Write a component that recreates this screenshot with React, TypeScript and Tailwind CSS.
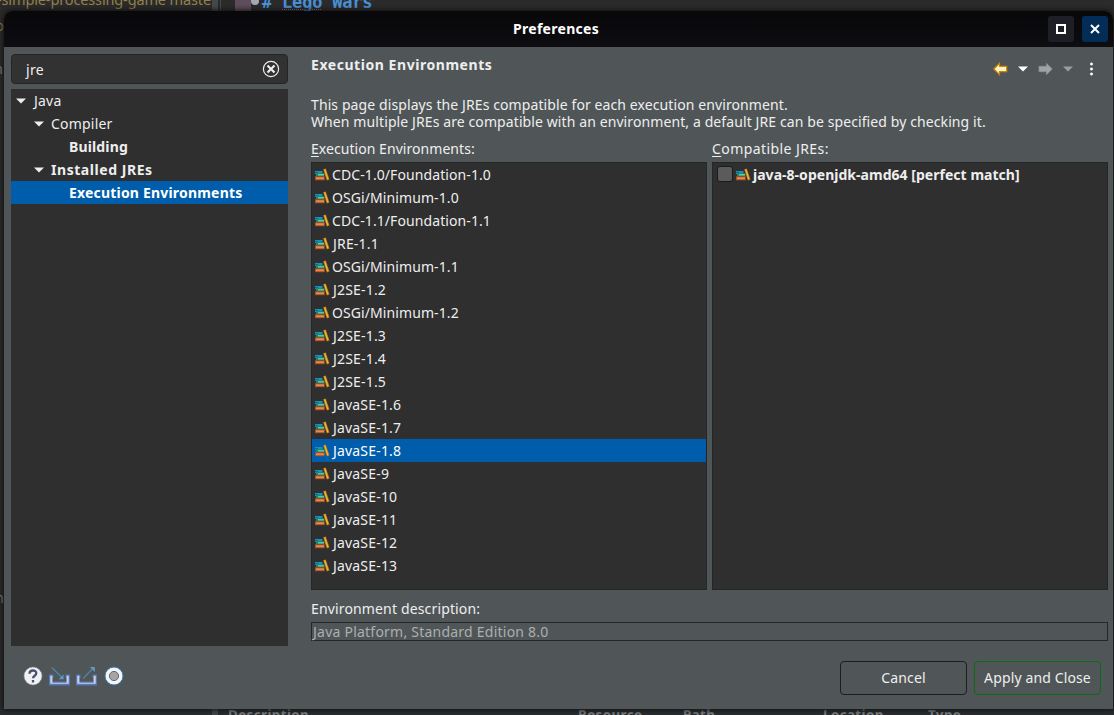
import React from "react";

const environments = [
  "CDC-1.0/Foundation-1.0",
  "OSGi/Minimum-1.0",
  "CDC-1.1/Foundation-1.1",
  "JRE-1.1",
  "OSGi/Minimum-1.1",
  "J2SE-1.2",
  "OSGi/Minimum-1.2",
  "J2SE-1.3",
  "J2SE-1.4",
  "J2SE-1.5",
  "JavaSE-1.6",
  "JavaSE-1.7",
  "JavaSE-1.8",
  "JavaSE-9",
  "JavaSE-10",
  "JavaSE-11",
  "JavaSE-12",
  "JavaSE-13",
];

function LibraryIcon() {
  return (
    <svg width="16" height="17" viewBox="0 0 16 17" className="shrink-0">
      <path d="M1 5h7.500v3H1z" fill="#1593c0" />
      <path d="M1 6h3v1H1z" fill="#0b6a94" />
      <path d="M2 7.200h8.500v3.300H2z" fill="#23845f" />
      <path d="M4 8.100h6v1.400H4z" fill="#6fc79b" />
      <path d="M1 10.300h9.800v3.900H1z" fill="#a8501f" />
      <path d="M2 11.300h8v1.900H2z" fill="#e08c5a" />
      <path d="M9.200 3.200l2.600-.8 3.700 11.200-2.700.9z" fill="#b97a12" />
      <path d="M10 3.600l1.300-.4 3.200 9.900-1.300.4z" fill="#f5b43c" />
    </svg>
  );
}

function Caret({ className = "" }: { className?: string }) {
  return (
    <svg width="10" height="6" viewBox="0 0 10 6" className={`shrink-0 ${className}`}>
      <path d="M0 .5h10L5 5.500z" fill="currentColor" />
    </svg>
  );
}

function Backdrop() {
  return (
    <div className="flex h-full flex-col justify-between overflow-hidden bg-[#2b2b2b]">
      <div className="relative h-[600px]">
        <span className="absolute -left-[3px] -top-[11px] text-[14.500px] tracking-[-0.13px] text-[#93804a]">-simple-processing-game maste</span>
        <span className="absolute left-[212px] top-0 h-[11px] w-[6px] bg-[#44484a]" />
        <span className="absolute left-[220px] top-0 h-[11px] w-px bg-[#44484a]" />
        <span className="absolute left-[235px] top-0 h-[11px] w-4 bg-[#5e4d5c]" />
        <span className="absolute left-[251px] -top-[3px] size-2 rounded-full bg-[#a3a8b4]" />
        <span className="absolute left-[262px] -top-[8px] font-['DejaVu_Sans_Mono'] text-[17px] font-bold leading-5 tracking-[-0.2px] text-[#4a90d6]">
          # <span className="underline decoration-[#a9788f] decoration-dotted decoration-1 underline-offset-1">Lego</span> Wars
        </span>
        <span className="absolute -left-[5px] top-[15px] text-[14.500px] text-[#93804a]">p</span>
        <span className="absolute -left-[6px] top-[58px] text-[14.500px] text-[#7b8288]">n</span>
        <span className="absolute -left-[5px] top-[587px] text-[14.500px] text-[#83867a]">n</span>
      </div>
      <div className="relative h-[7px] overflow-hidden bg-[#292d2f] text-[13.300px] font-bold leading-5 tracking-[0.450px] text-[#7b7d7f]">
        <span className="absolute left-[212px] h-[7px] w-[6px] bg-[#44484a]" />
        <span className="absolute left-[228px] -top-[3px]">Description</span>
        <span className="absolute left-[578px] -top-[3px]">Resource</span>
        <span className="absolute left-[683px] -top-[3px]">Path</span>
        <span className="absolute left-[823px] -top-[3px]">Location</span>
        <span className="absolute left-[928px] -top-[3px]">Type</span>
      </div>
    </div>
  );
}

function TitleBar() {
  return (
    <div className="relative flex h-9 shrink-0 items-center justify-end gap-2 bg-linear-to-b from-[#08080a] to-[#0d0d12] pr-[5px]">
      <span className="absolute inset-x-0 top-[7px] pr-[5px] text-center leading-[21px] tracking-[0.280px] font-bold text-white">Preferences</span>
      <button className="flex size-[26px] items-center justify-center rounded-[3px] bg-[#1e1e26]">
        <svg width="10" height="10" viewBox="0 0 10 10">
          <path d="M1 1h8v8H1z" fill="none" stroke="#fff" strokeWidth="2" />
        </svg>
      </button>
      <button className="flex size-[26px] items-center justify-center rounded-[3px] bg-[#032c57]">
        <svg width="10" height="10" viewBox="0 0 10 10">
          <path d="M1 1l8 8M9 1l-8 8" stroke="#fff" strokeWidth="2" />
        </svg>
      </button>
    </div>
  );
}

function Sidebar() {
  return (
    <div className="flex w-[277px] flex-col">
      <div className="flex h-[30px] items-center justify-between rounded-[4px] border border-[#232629] bg-[#323232] pl-[14px] pr-[7px] text-[#eee]">
        <span className="tracking-[0.300px]">jre</span>
        <svg width="18" height="18" viewBox="0 0 18 18" fill="none" stroke="#eee">
          <circle cx="9" cy="9" r="7.600" strokeWidth="1.200" />
          <path d="M5.500 5.500l7 7M12.500 5.500l-7 7" strokeWidth="2.200" />
        </svg>
      </div>
      <div className="mt-[5px] h-[557px] bg-[#2f2f2f] text-[#eee]">
        <div className="flex h-[23px] items-center gap-[8px] pl-[5px]"><Caret /><span className="tracking-[0.200px]">Java</span></div>
        <div className="flex h-[23px] items-center gap-[7px] pl-[23px]"><Caret /><span className="tracking-[0.200px]">Compiler</span></div>
        <div className="flex h-[23px] items-center pl-[58px] font-bold"><span className="tracking-[0.150px]">Building</span></div>
        <div className="flex h-[23px] items-center gap-[7px] pl-[23px] font-bold"><Caret /><span className="tracking-[0.550px]">Installed JREs</span></div>
        <div className="flex h-[23px] items-center bg-[#005dac] pl-[58px] font-bold text-white"><span className="tracking-[0.190px]">Execution Environments</span></div>
      </div>
      <div className="flex items-center gap-[6px] pl-[11px] pt-[20px]">
        <svg width="21" height="20" viewBox="0 0 21 20">
          <circle cx="11" cy="10" r="9" fill="#f1f1f3" stroke="#8d949c" strokeWidth=".6" />
          <path d="M7.500 7.800c0-4.300 6.800-4.300 6.800-.5 0 2.400-3.300 2.500-3.300 5M11 14v2.400" fill="none" stroke="#46536f" strokeWidth="2.300" />
        </svg>
        <svg width="21" height="20" viewBox="0 0 21 20">
          <path d="M0 8.500h4.500V12H3.800v3.500h13.400V12h-.7V8.500H21v11H0z" fill="#5877b5" />
          <path d="M1.300 9.800h2v7h14.400v-7h2v8H1.300z" fill="#c6d3ea" />
          <path d="M2.800 1.500L13.500 12" fill="none" stroke="#4c86a9" strokeWidth="1.300" />
          <path d="M14.500 8.500v4.800H9.800z" fill="#5b9bc4" />
        </svg>
        <svg width="21" height="20" viewBox="0 0 21 20">
          <path d="M0 8.500h4.500V12H3.800v3.500h13.400V12h-.7V8.500H21v11H0z" fill="#5877b5" />
          <path d="M1.300 9.800h2v7h14.400v-7h2v8H1.300z" fill="#c6d3ea" />
          <path d="M7 12.500L17 2.500" fill="none" stroke="#4c86a9" strokeWidth="1.300" />
          <path d="M18.800 1v5L13.800 1z" fill="#5b9bc4" />
        </svg>
        <svg width="21" height="20" viewBox="0 0 21 20">
          <circle cx="11" cy="10" r="9" fill="#f2f6fa" stroke="#3c78ad" strokeWidth="1" />
          <circle cx="11" cy="10" r="4.600" fill="#a5a5a5" stroke="#666" strokeWidth="1" />
        </svg>
      </div>
    </div>
  );
}

function NavTools() {
  return (
    <div className="flex h-[18px] items-center pr-[14px] pt-[3px]">
      <svg width="15" height="14" viewBox="0 0 15 14">
        <path d="M.8 7L6.500 1.300v3h7.200v5.400H6.500v3z" fill="#fff3c4" stroke="#c9860b" strokeWidth="1.200" />
      </svg>
      <Caret className="ml-[10px] text-white" />
      <svg width="15" height="14" viewBox="0 0 15 14" className="ml-[10px]">
        <path d="M14.200 7L8.500 1.300v3H1v5.400h7.500v3z" fill="#a0a2a3" stroke="#8c8f91" strokeWidth=".8" />
      </svg>
      <Caret className="ml-[10px] text-[#9a9c9d]" />
      <svg width="5" height="14" viewBox="0 0 5 14" className="ml-[16px]" fill="#fff" stroke="#3b3b3b" strokeWidth=".5">
        <circle cx="2.500" cy="2" r="1.800" />
        <circle cx="2.500" cy="7" r="1.800" />
        <circle cx="2.500" cy="12" r="1.800" />
      </svg>
    </div>
  );
}

export default function App() {
  return (
    <div className="relative h-[715px] w-[1114px] overflow-hidden font-['Noto_Sans',sans-serif] text-[14px] text-[#eee]">
      <Backdrop />
      <div className="absolute left-[4px] top-[11px] flex h-[698px] w-[1109px] flex-col overflow-hidden rounded-t-lg bg-[#505658] shadow-[0_0_5px_1px_#111]">
        <TitleBar />
        <div className="flex flex-1 gap-[23px] pl-[7px] pt-[7px]">
          <Sidebar />
          <div className="flex w-[797px] flex-col whitespace-nowrap">
            <div className="flex items-start justify-between">
              <span className="font-bold leading-[22px] tracking-[0.550px]">Execution Environments</span>
              <div className="pt-[4px]"><NavTools /></div>
            </div>
            <div className="mt-[20px] leading-[17px] tracking-[0.100px]">
              <div><span>This page displays the JREs compatible for each execution environment.</span></div>
              <div><span>When multiple JREs are compatible with an environment, a default JRE can be specified by checking it.</span></div>
            </div>
            <div className="mt-[8px] flex gap-[5px]">
              <div className="w-[396px]">
                <div className="h-[24px] leading-[22px] tracking-[0.050px]"><span className="underline underline-offset-2">E</span>xecution Environments:</div>
                <div className="h-[428px] border border-[#252628] bg-[#2f2f2f]">
                  {environments.map((name) => (
                    <div
                      key={name}
                      className={`flex h-[23px] items-center gap-[2px] pl-[2px] ${name === "JavaSE-1.8" ? "bg-[#005dac] text-white" : ""}`}
                    >
                      <LibraryIcon />
                      <span className={name.startsWith("J") ? "pl-px tracking-[0.180px]" : "tracking-[0.090px]"}>{name}</span>
                    </div>
                  ))}
                </div>
              </div>
              <div className="w-[396px]">
                <div className="h-[24px] leading-[22px] tracking-[0.420px]"><span className="underline underline-offset-2">C</span>ompatible JREs:</div>
                <div className="h-[428px] border border-[#252628] bg-[#2f2f2f]">
                  <div className="flex h-[23px] items-center pl-[4px] font-bold">
                    <span className="mb-px mr-[2px] size-[16px] rounded-[3px] border border-[#1b1b1b] bg-[#5b5b5b]" />
                    <LibraryIcon />
                    <span className="ml-[2px] tracking-[0.030px]">java-8-openjdk-amd64 [perfect match]</span>
                  </div>
                </div>
              </div>
            </div>
            <div className="mt-[8px] h-[24px] leading-[22px] tracking-[0.150px]"><span>Environment description:</span></div>
            <div className="h-[19px] border border-[#25262a] pl-px leading-[18px] tracking-[0.230px] text-[#acaeaf]"><span>Java Platform, Standard Edition 8.0</span></div>
            <div className="mt-[20px] flex justify-end gap-[7px] pr-[7px]">
              <button className="h-[34px] w-[127px] rounded-[4px] border border-[#1c1d20] pb-[2px] tracking-[0.150px]">Cancel</button>
              <button className="h-[34px] w-[127px] rounded-[4px] border border-[#0d6a16] pb-[2px] tracking-[0.130px]">Apply and Close</button>
            </div>
          </div>
        </div>
      </div>
    </div>
  );
}
